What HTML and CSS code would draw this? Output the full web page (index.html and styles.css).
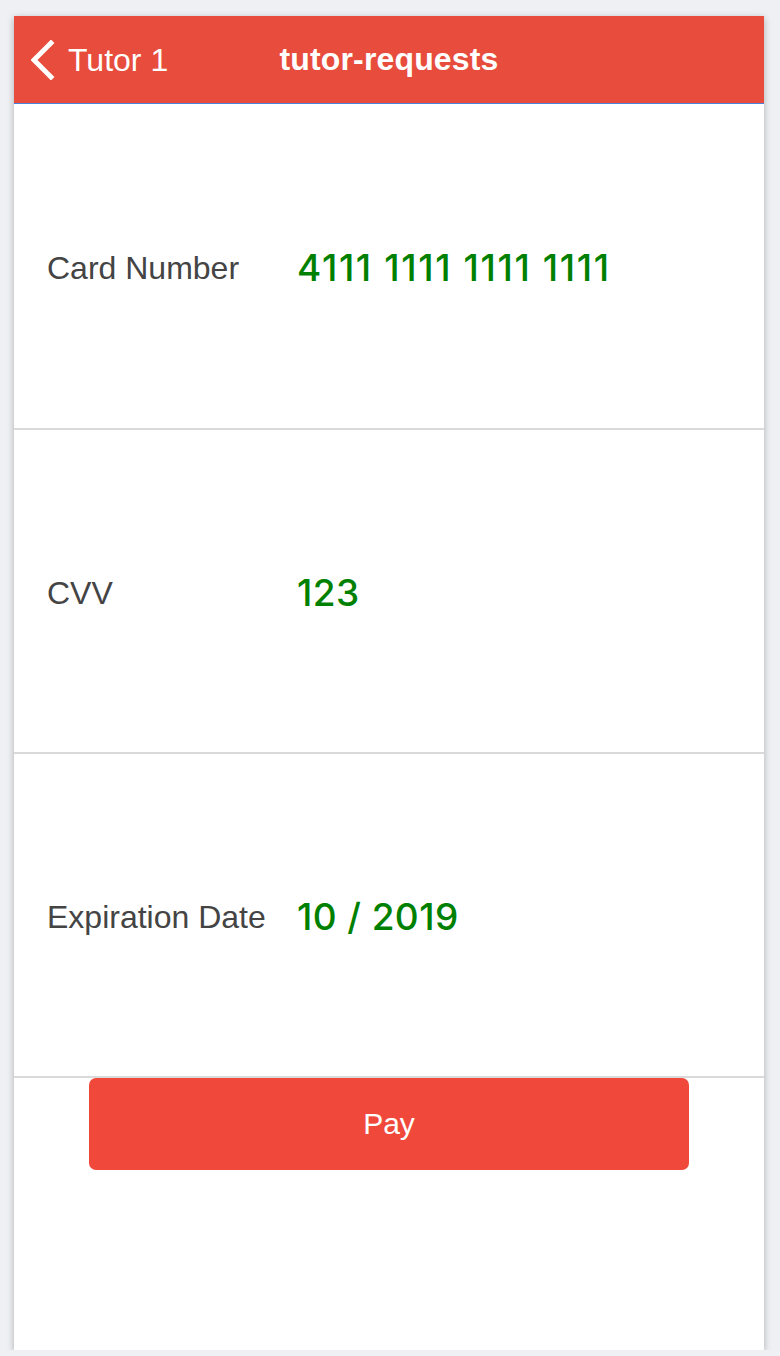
FILE: index.html
```html
<!DOCTYPE html>
<html>
<head>
<meta charset="utf-8">
<link rel="stylesheet" href="styles.css">
</head>
<body>
<div class="page">
  <div class="card">
    <header class="nav">
      <div class="back">
        <svg class="chev" width="24" height="40" viewBox="0 0 24 40"><polyline points="20,3 3,20 20,37" fill="none" stroke="#fff" stroke-width="4.9" stroke-linecap="square"/></svg>
        <span class="back-text">Tutor 1</span>
      </div>
      <div class="title">tutor-requests</div>
    </header>
    <div class="row row-first">
      <div class="label">Card Number</div>
      <div class="value value-wide">4111 1111 1111 1111</div>
    </div>
    <div class="row">
      <div class="label">CVV</div>
      <div class="value">123</div>
    </div>
    <div class="row">
      <div class="label">Expiration Date</div>
      <div class="value">10 / 2019</div>
    </div>
    <div class="actions">
      <button class="pay">Pay</button>
    </div>
  </div>
</div>
</body>
</html>
```
FILE: styles.css
```css
html, body {
  margin: 0;
  padding: 0;
  background: #eff0f4;
}
body {
  font-family: "Liberation Sans", Arial, sans-serif;
}
.page {
  padding: 16px 0 0 14px;
}
.card {
  width: 750px;
  height: 1334px;
  background: #fff;
  box-shadow: 0 2px 7px rgba(0, 0, 0, 0.28);
  display: flex;
  flex-direction: column;
}
.nav {
  position: relative;
  height: 87px;
  background: #e74c3c;
  border-bottom: 1px solid #4a82dc;
  display: flex;
  align-items: center;
  color: #fff;
}
.back {
  display: flex;
  align-items: center;
  padding-left: 17px;
}
.chev {
  display: block;
  margin-right: 13px;
}
.back-text {
  font-size: 32px;
  line-height: 1;
}
.title {
  position: absolute;
  left: 0;
  right: 0;
  top: 0;
  bottom: 0;
  display: flex;
  align-items: center;
  justify-content: center;
  font-size: 32px;
  font-weight: bold;
  letter-spacing: 0.15px;
  pointer-events: none;
}
.row {
  height: 322px;
  border-bottom: 2px solid #dadada;
  display: flex;
  align-items: center;
  padding-left: 33px;
}
.row-first {
  height: 324px;
}
.label {
  width: 250px;
  font-size: 32px;
  color: #444;
  padding-top: 4px;
}
.value {
  font-family: "Inter", "Liberation Sans", sans-serif;
  font-size: 37px;
  font-weight: 500;
  color: #008000;
  padding-top: 2px;
  letter-spacing: 0.4px;
}
.value-wide {
  letter-spacing: 1.6px;
}
.actions {
  display: flex;
  justify-content: center;
}
.pay {
  width: 600px;
  height: 92px;
  border: none;
  border-radius: 7px;
  background: #f0493b;
  color: #fff;
  font-family: "Liberation Sans", Arial, sans-serif;
  font-size: 30px;
  padding: 0;
}
```
